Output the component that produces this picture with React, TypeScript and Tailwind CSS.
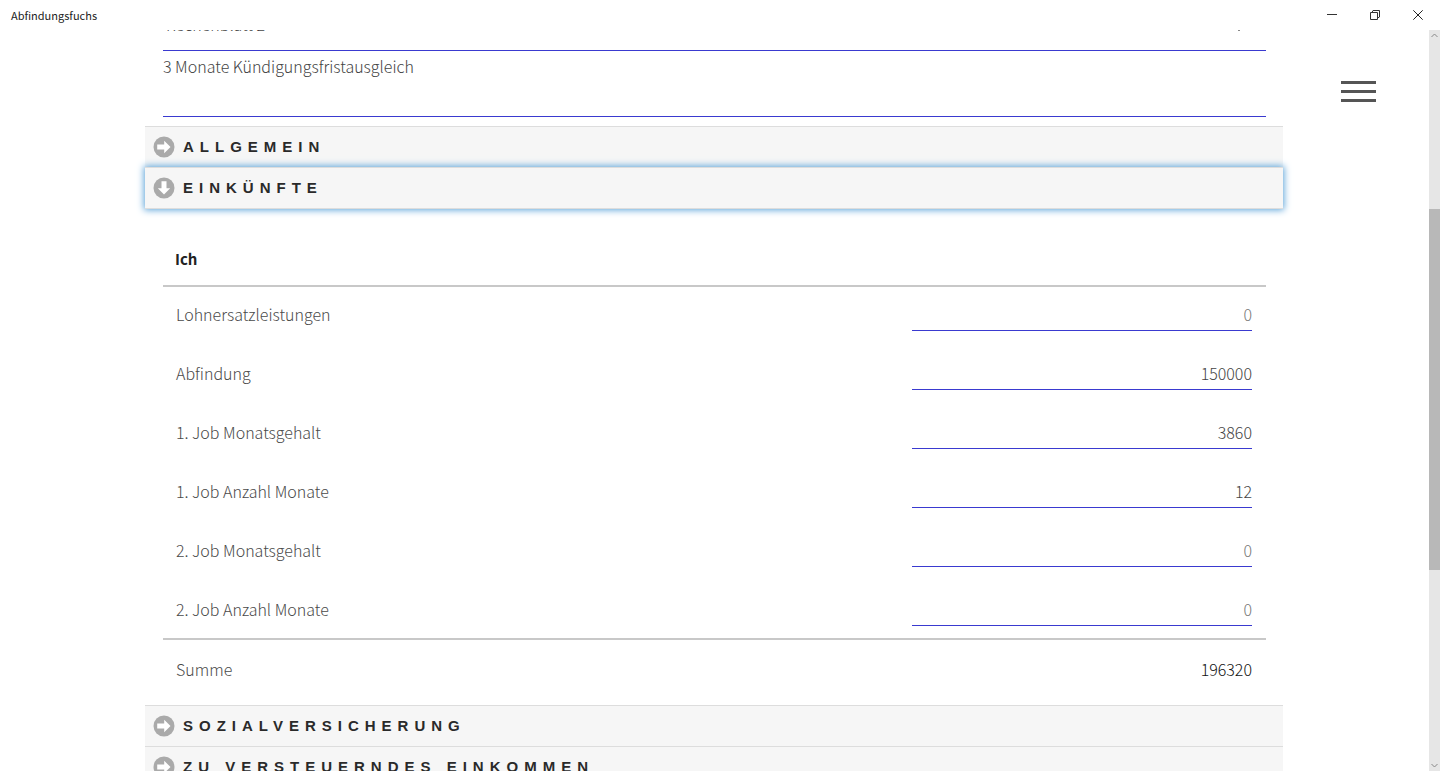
import { useState } from "react";

const bodyFont = "font-['Noto_Sans_CJK_SC','Noto_Sans',sans-serif]";

interface IncomeField {
  id: string;
  label: string;
  value: string;
}

const initFields: IncomeField[] = [
  { id: "lohnersatz", label: "Lohnersatzleistungen", value: "" },
  { id: "abfindung", label: "Abfindung", value: "150000" },
  { id: "job1Gehalt", label: "1. Job Monatsgehalt", value: "3860" },
  { id: "job1Monate", label: "1. Job Anzahl Monate", value: "12" },
  { id: "job2Gehalt", label: "2. Job Monatsgehalt", value: "" },
  { id: "job2Monate", label: "2. Job Anzahl Monate", value: "" }
];

function ArrowIcon(props: { down?: boolean }) {
  return (
    <svg
      width="22"
      height="22"
      viewBox="0 0 22 22"
      className={props.down ? "shrink-0 rotate-90" : "shrink-0"}
      aria-hidden="true"
    >
      <circle cx="11" cy="11" r="10.5" fill="#aaa" />
      <path d="M4.2 8.5h7V4.8l6.3 6.2-6.3 6.2v-3.7h-7z" fill="#fff" />
    </svg>
  );
}

function SectionHeader(props: {
  title: string;
  open?: boolean;
  onClick: () => void;
}) {
  return (
    <h2>
      <button
        type="button"
        aria-expanded={!!props.open}
        onClick={props.onClick}
        className={
          props.open
            ? "relative flex h-[42px] w-full items-center gap-2 border-y border-[#ddd] bg-[#f6f6f6] px-2 shadow-[0_0_7px_1px_#5ba3d9] outline-none"
            : "flex h-[41px] w-full items-center gap-2 border-t border-[#ddd] bg-[#f6f6f6] px-2 outline-none"
        }
      >
        <ArrowIcon down={props.open} />
        <span className="font-['Liberation_Sans',Arial,sans-serif] text-[15px] font-bold tracking-[6px] whitespace-nowrap text-[#2a2a2a] uppercase">
          {props.title}
        </span>
      </button>
    </h2>
  );
}

function TitleBar() {
  return (
    <header className="flex h-[30px] shrink-0 items-center justify-between pr-px pl-[11px]">
      <h1 className="text-[11px] font-normal text-[#222]">Abfindungsfuchs</h1>
      <div className="flex h-full">
        <button type="button" aria-label="Minimieren" className="flex w-[43px] items-center justify-center">
          <svg width="10" height="10" viewBox="0 0 10 10" stroke="#333" fill="none">
            <path d="M0 4.5h10" />
          </svg>
        </button>
        <button type="button" aria-label="Wiederherstellen" className="flex w-[43px] items-center justify-center">
          <svg width="10" height="10" viewBox="0 0 10 10" stroke="#333" fill="none">
            <path d="M.5 2.5h7v7h-7zM2 2.5l1-2h6.500v6.500l-2 1" />
          </svg>
        </button>
        <button type="button" aria-label="Schließen" className="flex w-[43px] items-center justify-center">
          <svg width="10" height="10" viewBox="0 0 10 10" stroke="#222" fill="none">
            <path d="M.3.3l9.4 9.4M9.7.3L.3 9.7" />
          </svg>
        </button>
      </div>
    </header>
  );
}

function ScrollTrack() {
  return (
    <div className="flex w-[11px] shrink-0 flex-col items-center justify-between bg-[#e6e6e6] py-[3px]" aria-hidden="true">
      <svg width="7" height="5" viewBox="0 0 7 5" stroke="#888" fill="none">
        <path d="M.5 4l3-3 3 3" />
      </svg>
      <div className="flex w-full grow flex-col pt-[171px] pb-[193px]">
        <div className="w-full grow bg-[#b8b8b8]"></div>
      </div>
      <svg width="7" height="5" viewBox="0 0 7 5" stroke="#888" fill="none">
        <path d="M.5 1l3 3 3-3" />
      </svg>
    </div>
  );
}

export default function App() {
  const [fields, setFields] = useState(initFields);
  const [open, setOpen] = useState(true);
  const [sheet, setSheet] = useState("Rechenblatt 2");
  const [note, setNote] = useState("3 Monate Kündigungsfristausgleich");

  const num = (id: string) =>
    Number(fields.find((f) => f.id === id)?.value) || 0;
  const sum =
    num("lohnersatz") +
    num("abfindung") +
    num("job1Gehalt") * num("job1Monate") +
    num("job2Gehalt") * num("job2Monate");

  return (
    <div className={`flex h-screen flex-col overflow-hidden bg-white pb-px text-base leading-[22px] font-light ${bodyFont}`}>
      <TitleBar />
      <div className="relative flex min-h-0 grow">
        <main className="min-w-0 grow overflow-hidden pr-[146px] pl-[145px]">
          <div className="pr-[17px] pl-[18px]">
            <div className="-mt-[17px] flex h-[38px] items-start border-b border-[#3a3ad0]">
              <select
                aria-label="Rechenblatt"
                value={sheet}
                onChange={(e) => setSheet(e.target.value)}
                className="h-[22px] grow appearance-none pl-[3px] text-[#444] outline-none"
              >
                <option>Rechenblatt 1</option>
                <option>Rechenblatt 2</option>
              </select>
              <svg
                width="12"
                height="7"
                viewBox="0 0 12 7"
                stroke="#888"
                fill="none"
                className="mt-3 mr-[21px] shrink-0"
                aria-hidden="true"
              >
                <path d="M1 1l5 5 5-5" />
              </svg>
            </div>
            <textarea
              aria-label="Bemerkung"
              value={note}
              onChange={(e) => setNote(e.target.value)}
              className="block h-[66px] w-full resize-none border-b border-[#3a3ad0] pt-1 text-[#444] outline-none"
            />
          </div>

          <div className="mt-[9px]">
            <SectionHeader title="Allgemein" onClick={() => {}} />
            <SectionHeader
              title="Einkünfte"
              open={open}
              onClick={() => setOpen(!open)}
            />
            {open && (
              <div className="pr-[17px] pl-[18px]">
                <h3 className="mt-[39px] px-3 pb-[15px] text-[15px] leading-[22px] font-bold text-[#222]">
                  Ich
                </h3>
                <div className="flex flex-col gap-[27px] border-y-2 border-[#c8c8c8] py-3 pr-[14px] pl-[13px]">
                  {fields.map((field) => (
                    <div
                      key={field.id}
                      className="flex h-8 items-center justify-between"
                    >
                      <label htmlFor={field.id} className="pb-0.5 text-[#4a4a4a]">
                        {field.label}
                      </label>
                      <input
                        id={field.id}
                        inputMode="numeric"
                        placeholder="0"
                        value={field.value}
                        onChange={(e) =>
                          setFields(
                            fields.map((f) =>
                              f.id === field.id
                                ? { ...f, value: e.target.value }
                                : f
                            )
                          )
                        }
                        className="h-8 w-[340px] border-b border-[#3a3ad0] pb-0.5 text-right text-[#444] outline-none placeholder:text-[#777]"
                      />
                    </div>
                  ))}
                </div>
                <div className="flex h-[65px] items-center justify-between pr-[14px] pb-2 pl-[13px]">
                  <span className="text-[#4a4a4a]">Summe</span>
                  <output className="text-[#111]">{sum}</output>
                </div>
              </div>
            )}
            <SectionHeader title="Sozialversicherung" onClick={() => {}} />
            <SectionHeader
              title="Zu versteuerndes Einkommen"
              onClick={() => {}}
            />
          </div>
        </main>
        <button
          type="button"
          aria-label="Menü"
          className="absolute top-[51px] right-16 flex w-[35px] flex-col gap-[6px]"
        >
          <span className="h-[3px] w-full bg-[#555]"></span>
          <span className="h-[3px] w-full bg-[#555]"></span>
          <span className="h-[3px] w-full bg-[#555]"></span>
        </button>
        <ScrollTrack />
      </div>
    </div>
  );
}
